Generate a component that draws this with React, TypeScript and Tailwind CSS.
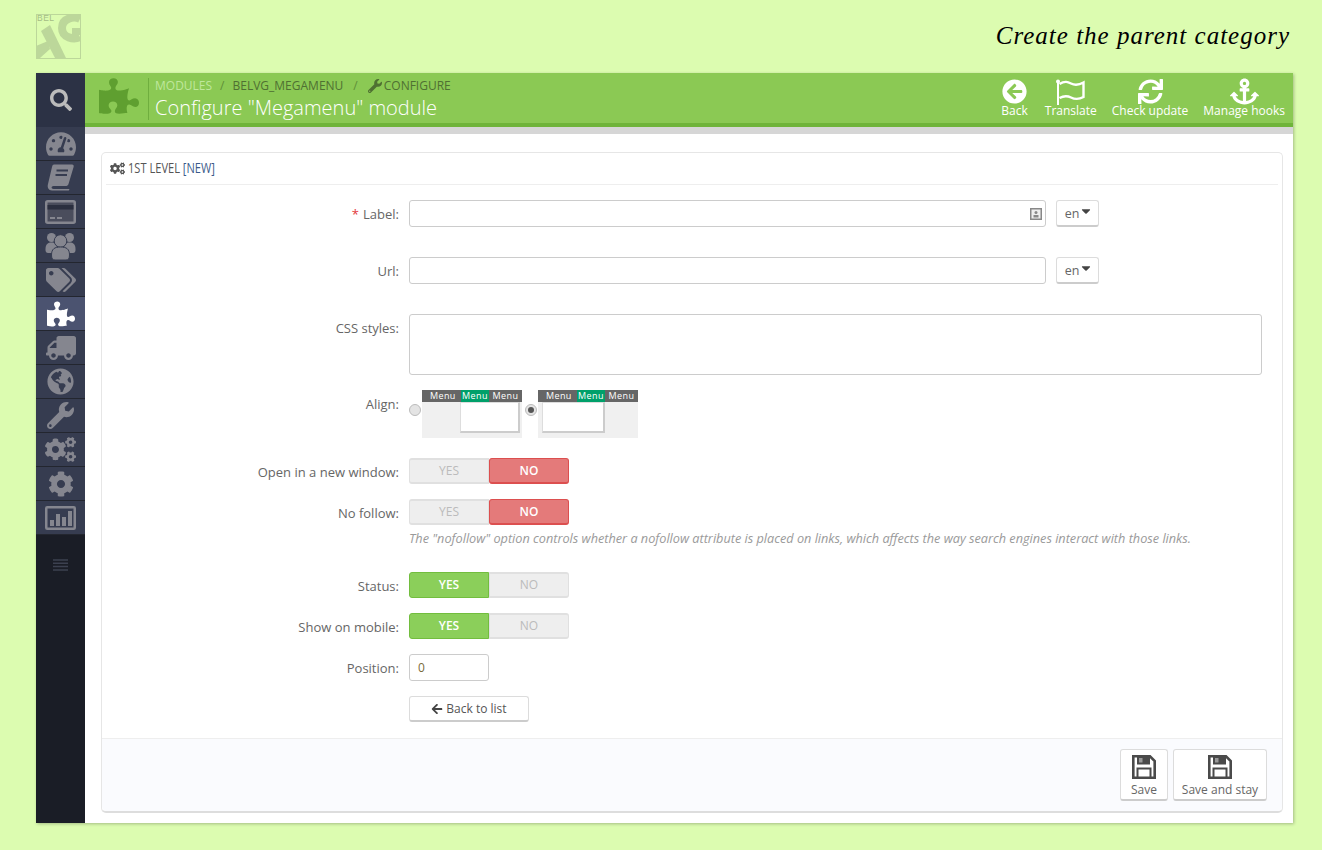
import {
  FaAnchor,
  FaArrowCircleLeft,
  FaArrowLeft,
  FaCaretDown,
  FaCog,
  FaCogs,
  FaGlobeAmericas,
  FaPuzzlePiece,
  FaSearch,
  FaSync,
  FaTachometerAlt,
  FaTags,
  FaTruck,
  FaWrench,
} from 'react-icons/fa';
import type { ReactNode } from 'react';

function BookIcon() {
  return (
    <svg width="27" height="27" viewBox="0 0 27 27" fill="currentColor" className="block">
      <path d="M7 0.5 H25 C26.5 0.5 27 1.5 26.6 3 L21.5 20 C21 21.5 20 22 18.5 22 H6.5 C4 22 4 25 6.5 25 H22.5 L21.8 26.5 H5 C1.5 26.5 0 23.5 1 20 L5 3 C5.4 1.3 6 0.5 7 0.5 Z" />
      <path d="M9.5 6.5 H21 M8.5 11 H20" stroke="#363c50" strokeWidth="2" />
    </svg>
  );
}

function CardIcon() {
  return (
    <svg width="31" height="24" viewBox="0 0 31 24" fill="none" className="block">
      <rect x="1.25" y="1.25" width="28.5" height="21.5" rx="1.5" stroke="currentColor" strokeWidth="2.5" fill="#4a4d5c" />
      <rect x="2.5" y="5" width="26" height="4.5" fill="#2b2f3f" />
      <path d="M5 18 H10 M12 18 H17" stroke="currentColor" strokeWidth="1.8" />
    </svg>
  );
}

function UsersIcon() {
  return (
    <svg width="31" height="28" viewBox="0 0 31 28" fill="currentColor" className="block">
      <circle cx="6.5" cy="5.5" r="4.5" />
      <circle cx="24.5" cy="5.5" r="4.5" />
      <path d="M0.5 17 C0.5 12 3 10.5 6.5 10.5 C10 10.5 12 12 12 17 V21 H3 C1.5 21 0.5 20 0.5 18 Z" />
      <path d="M30.5 17 C30.5 12 28 10.5 24.5 10.5 C21 10.5 19 12 19 17 V21 H28 C29.5 21 30.5 20 30.5 18 Z" />
      <circle cx="15.5" cy="9" r="6.3" stroke="#363c50" strokeWidth="1" />
      <path d="M6.5 23 C6.5 17 9.5 15 15.5 15 C21.5 15 24.5 17 24.5 23 C24.5 26.5 23.5 28 21 28 H10 C7.5 28 6.5 26.5 6.5 23 Z" stroke="#363c50" strokeWidth="1" />
    </svg>
  );
}

function ChartIcon() {
  return (
    <svg width="31" height="24" viewBox="0 0 31 24" fill="none" className="block">
      <rect x="1.25" y="1.25" width="28.5" height="21.5" rx="1" stroke="currentColor" strokeWidth="2.5" />
      <g fill="currentColor">
        <rect x="5" y="14" width="4" height="6" />
        <rect x="11" y="8" width="4" height="12" />
        <rect x="17" y="11" width="4" height="9" />
        <rect x="23" y="5" width="4" height="15" />
      </g>
    </svg>
  );
}

function MenuLines() {
  return (
    <svg width="15" height="12" viewBox="0 0 15 12" fill="none" className="block">
      <path d="M0 1 H15 M0 4.3 H15 M0 7.6 H15 M0 11 H15" stroke="currentColor" strokeWidth="1.5" />
    </svg>
  );
}

const sidebarItems = [
  { icon: <FaTachometerAlt size={30} /> },
  { icon: <BookIcon /> },
  { icon: <CardIcon /> },
  { icon: <UsersIcon /> },
  { icon: <FaTags size={30} /> },
  { icon: <FaPuzzlePiece size={28} />, active: true },
  { icon: <FaTruck size={30} className="-scale-x-100" /> },
  { icon: <FaGlobeAmericas size={27} /> },
  { icon: <FaWrench size={27} /> },
  { icon: <FaCogs size={31} /> },
  { icon: <FaCog size={26} /> },
  { icon: <ChartIcon /> },
];

function Logo() {
  return (
    <svg width="45" height="45" viewBox="0 0 45 45" className="block">
      <rect x="0.5" y="0.5" width="44" height="44" fill="none" stroke="#bcd79a" />
      <path d="M5 17 L14 11 L30 44 L19 44 Z" fill="#bcd79a" />
      <path d="M0 32 L12 27 L14 35 L4 44 L0 44 Z" fill="#bcd79a" />
      <path d="M44 5 C38 2 26 4 26 14 C26 24 38 26 44 23" fill="none" stroke="#bcd79a" strokeWidth="8" />
      <path d="M36 14 H44 V21 H36 Z" fill="#bcd79a" />
      <text x="1" y="7" fontSize="8.5" letterSpacing="0.5" fill="#a5bd85" fontFamily="'Liberation Sans', sans-serif">BEL</text>
    </svg>
  );
}

function FlagIcon() {
  return (
    <svg width="29" height="26" viewBox="0 0 29 26" fill="none" className="block">
      <path d="M2 3 V26" stroke="white" strokeWidth="2" />
      <circle cx="2" cy="2.5" r="2" fill="white" />
      <path
        d="M3.5 5 C9 1.5 12 3 15 4.5 C19 6.5 23 6 27.5 3.5 V18 C23 20.5 19 20.5 15 18.5 C12 17 9 16 3.5 19"
        stroke="white"
        strokeWidth="2.4"
      />
    </svg>
  );
}

function SaveIcon() {
  return (
    <svg width="24" height="24" viewBox="0 0 24 24" className="block">
      <path d="M1.3 1.3 H18 L22.7 6 V22.7 H1.3 Z" fill="white" stroke="#4a4a4a" strokeWidth="2.6" />
      <rect x="5" y="2" width="13" height="7.5" fill="#4a4a4a" />
      <rect x="7" y="3" width="3.5" height="4.5" fill="#999" />
      <rect x="5.5" y="13.5" width="13" height="9" fill="white" stroke="#4a4a4a" strokeWidth="2" />
    </svg>
  );
}

function ToolButton({ icon, label, className }: { icon: ReactNode; label: string; className: string }) {
  return (
    <div className={`flex flex-col items-center ${className}`}>
      <div className="h-[31px] flex items-center justify-center">{icon}</div>
      <span className="-mt-[4px] text-[12px] leading-[16px] text-white">{label}</span>
    </div>
  );
}

function FormRow({
  label,
  required,
  className = '',
  children,
}: {
  label: string;
  required?: boolean;
  className?: string;
  children: ReactNode;
}) {
  return (
    <div className={`flex ${className}`}>
      <div className="h-[27px] w-[297px] shrink-0 text-right text-[13px] leading-[29px] text-[#666]">
        {required && <span className="text-[#e3383c] mr-1">*</span>}
        {label}:
      </div>
      <div className="ml-[10px] flex-1">{children}</div>
    </div>
  );
}

function LangButton() {
  return (
    <button className="ml-[10px] flex h-[27px] w-[43px] items-center justify-center rounded-[3px] border border-[#dcdcdc] border-b-[2px] border-b-[#ccc] bg-white pl-[3px] text-[12.5px] text-[#666]">
      <span className="mt-[2px]">en</span>
      <FaCaretDown size={14} className="text-[#444] -mt-[4px]" />
    </button>
  );
}

function Toggle({ value }: { value: boolean }) {
  const off = 'bg-[#eeeeee] border border-[#e0e0e0] border-t-[2px] border-b-[2px] text-[#bbbbbb] font-normal';
  return (
    <div className="flex h-[26px] w-[160px] text-[12px] font-semibold">
      <div
        className={`flex w-[80px] items-center justify-center rounded-l-[3px] ${
          value ? 'bg-[#8bcf5a] border border-[#72bd3e] text-white' : off
        }`}
      >
        YES
      </div>
      <div
        className={`flex w-[80px] items-center justify-center rounded-r-[3px] ${
          value ? off : 'bg-[#e47a7a] border border-[#dc4f4f] border-b-[2px] rounded-l-[3px] text-white'
        }`}
      >
        NO
      </div>
    </div>
  );
}

function AlignOption({ checked, right }: { checked?: boolean; right?: boolean }) {
  return (
    <div className="flex items-start gap-[1px]">
      <div className="mt-[14px] flex h-[12px] w-[12px] items-center justify-center rounded-full border border-[#bbb] bg-[#e4e4e4]">
        {checked && <div className="h-[6px] w-[6px] rounded-full bg-[#555]" />}
      </div>
      <div className="h-[48px] w-[100px] bg-[#f0f0f0]">
        <div className="flex h-[12px] bg-[#666] text-[9px] leading-[12px] tracking-[0.4px] text-white">
          <span className="w-[39px] pl-[8px]">Menu</span>
          <span className="w-[28px] bg-[#00a06a] text-center">Menu</span>
          <span className="flex-1 text-center">Menu</span>
        </div>
        <div
          className={`h-[31px] border border-[#ddd] border-b-[2px] border-r-[2px] border-b-[#ccc] border-r-[#ccc] bg-white ${
            right ? 'w-[63px] ml-[4px]' : 'w-[60px] ml-[38px]'
          }`}
        />
      </div>
    </div>
  );
}

export default function App() {
  return (
    <div
      className="h-[850px] w-[1322px] overflow-hidden bg-[#dcfcb0]"
      style={{ fontFamily: "'Open Sans', 'Liberation Sans', sans-serif" }}
    >
      <div className="flex h-[73px] items-start justify-between pl-[36px] pr-[32px] pt-[14px]">
        <Logo />
        <div className="mt-[5px] text-[25px] italic leading-[34px] tracking-[1px] text-black font-['Liberation_Serif',serif]">
          Create the parent category
        </div>
      </div>

      <div className="mx-[36px] mr-[29px] flex h-[750px] shadow-[1px_1px_3px_rgba(0,0,0,0.25)]">
        <aside className="flex w-[49px] shrink-0 flex-col bg-[#1a1d26]">
          <div className="flex h-[54px] items-center justify-center bg-[#2c3245] text-[#bbbbbb]">
            <FaSearch size={22} />
          </div>
          {sidebarItems.map((item, i) => (
            <div
              key={i}
              className={`flex h-[34px] items-center justify-center border-b border-[#23262f] ${
                item.active ? 'bg-[#4b5370] text-white' : 'bg-[#363c50] text-[#85868f]'
              }`}
            >
              {item.icon}
            </div>
          ))}
          <div className="flex h-[60px] items-center justify-center text-[#3c4150]">
            <MenuLines />
          </div>
        </aside>

        <main className="flex min-w-0 flex-1 flex-col bg-white">
          <header className="flex h-[54px] bg-[#8bc954] border-b-[4px] border-[#6fb43a]">
            <div className="ml-[14px] mt-[3px] text-[#5f9f30]">
              <FaPuzzlePiece size={40} />
            </div>
            <div className="ml-[9px] mt-[5px] h-[42px] border-l border-[#6fae3e] pl-[6px]">
              <div className="flex text-[12px] uppercase leading-[16px] text-[#4f7032]">
                <span className="text-[#bfe79c]">Modules</span>
                <span className="mx-[8px] text-[#5f8f38]">/</span>
                <span>belvg_megamenu</span>
                <span className="ml-[10px] mr-[10px] text-[#5f8f38]">/</span>
                <span className="flex items-center gap-[2px]">
                  <FaWrench size={14} />
                  Configure
                </span>
              </div>
              <h1 className="mt-[1px] text-[20px] font-light leading-[26px] text-white">Configure "Megamenu" module</h1>
            </div>
            <div className="ml-auto flex pr-[8px] pt-[3px]">
              <ToolButton icon={<FaArrowCircleLeft size={25} color="white" />} label="Back" className="mr-[17px]" />
              <ToolButton icon={<FlagIcon />} label="Translate" className="mr-[15px]" />
              <ToolButton icon={<FaSync size={25} color="white" />} label="Check update" className="mr-[15px]" />
              <ToolButton icon={<FaAnchor size={29} color="white" />} label="Manage hooks" className="" />
            </div>
          </header>
          <div className="h-[7px] bg-[#d6d6d6]" />

          <div className="mx-[16px] mr-[10px] mt-[18px] flex h-[661px] flex-col rounded-[5px] border border-[#e6e6e6] border-b-[2px] border-b-[#ddd]">
            <div className="mx-[4px] flex h-[32px] items-center gap-[3px] border-b border-[#eeeeee] pl-[4px] text-[#555]">
              <FaCogs size={15} />
              <span className="-mt-[2px] inline-block origin-left scale-x-[0.74] whitespace-nowrap text-[15px] uppercase">
                1st level <span className="text-[#3a5a8a]">[new]</span>
              </span>
            </div>

            <div className="flex flex-1 flex-col pt-[15px]">
              <FormRow label="Label" required>
                <div className="flex">
                  <div className="flex h-[27px] w-[637px] items-center justify-end rounded-[3px] border border-[#cccccc] pr-[3px] text-[#888]">
                    <svg width="12" height="12" viewBox="0 0 12 12">
                      <rect x="0.75" y="0.75" width="10.5" height="10.5" fill="#eee" stroke="#888" strokeWidth="1.5" />
                      <circle cx="6" cy="4.5" r="1.5" fill="#888" />
                      <rect x="3.5" y="7" width="5" height="2.5" fill="#888" />
                    </svg>
                  </div>
                  <LangButton />
                </div>
              </FormRow>
              <FormRow label="Url" className="mt-[30px]">
                <div className="flex">
                  <div className="h-[27px] w-[637px] rounded-[3px] border border-[#cccccc]" />
                  <LangButton />
                </div>
              </FormRow>
              <FormRow label="CSS styles" className="mt-[30px]">
                <div className="h-[61px] w-[853px] rounded-[3px] border border-[#cccccc]" />
              </FormRow>
              <FormRow label="Align" className="mt-[15px]">
                <div className="flex gap-[3px]">
                  <AlignOption />
                  <AlignOption checked right />
                </div>
              </FormRow>
              <FormRow label="Open in a new window" className="mt-[20px]">
                <Toggle value={false} />
              </FormRow>
              <FormRow label="No follow" className="mt-[14px]">
                <div>
                  <Toggle value={false} />
                  <p className="mt-[6px] text-[12.7px] italic leading-[15px] text-[#9a9a9a]">
                    The "nofollow" option controls whether a nofollow attribute is placed on links, which affects the way search engines interact with those links.
                  </p>
                </div>
              </FormRow>
              <FormRow label="Status" className="mt-[26px]">
                <Toggle value />
              </FormRow>
              <FormRow label="Show on mobile" className="mt-[14px]">
                <Toggle value />
              </FormRow>
              <FormRow label="Position" className="mt-[14px]">
                <div className="flex h-[27px] w-[80px] items-center rounded-[3px] border border-[#cccccc] pl-[8px] text-[12px] text-[#7a6a3a]">
                  0
                </div>
              </FormRow>
              <div className="ml-[307px] mt-[15px]">
                <button className="flex h-[26px] w-[120px] items-center justify-center gap-[3px] rounded-[3px] border border-[#dcdcdc] border-b-[2px] border-b-[#ccc] bg-white text-[12px] text-[#555]">
                  <FaArrowLeft size={12} className="text-[#444]" />
                  Back to list
                </button>
              </div>

              <div className="mt-auto flex h-[73px] justify-end gap-[5px] rounded-b-[5px] border-t border-[#eeeeee] bg-[#fafbfe] pr-[15px] pt-[10px]">
                <button className="flex h-[52px] w-[48px] flex-col items-center rounded-[3px] border border-[#dcdcdc] border-b-[2px] border-b-[#ccc] bg-white pt-[5px] text-[12px] leading-[16px] text-[#666]">
                  <SaveIcon />
                  <span className="mt-[3px]">Save</span>
                </button>
                <button className="flex h-[52px] w-[94px] flex-col items-center rounded-[3px] border border-[#dcdcdc] border-b-[2px] border-b-[#ccc] bg-white pt-[5px] text-[12px] leading-[16px] text-[#666]">
                  <SaveIcon />
                  <span className="mt-[3px]">Save and stay</span>
                </button>
              </div>
            </div>
          </div>
        </main>
      </div>
    </div>
  );
}
